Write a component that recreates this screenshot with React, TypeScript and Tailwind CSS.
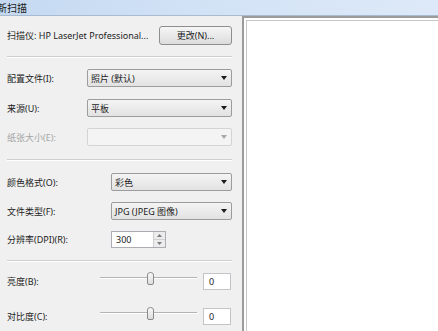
import React from "react";

const font = { fontFamily: '"Noto Sans", "Noto Sans CJK SC", sans-serif' };

function Arrow({ disabled }: { disabled?: boolean }) {
  return (
    <svg width="6" height="4" viewBox="0 0 6 4" className="shrink-0">
      <path d="M0 0 H6 L3 4 Z" fill={disabled ? "#a8a8a8" : "#1a1a1a"} />
    </svg>
  );
}

function Combo({ text, disabled }: { text?: string; disabled?: boolean }) {
  return (
    <div
      className={
        "flex h-[18px] min-w-0 flex-1 items-center justify-between rounded-[2px] border pl-[3px] pr-[4px] " +
        (disabled
          ? "border-[#d4d4d4] bg-[#f4f4f4]"
          : "border-[#9c9c9c] bg-gradient-to-b from-[#f4f4f4] to-[#e2e2e2]")
      }
    >
      <span className="whitespace-nowrap leading-none text-[#1c1c1c]">{text}</span>
      <Arrow disabled={disabled} />
    </div>
  );
}

function Sep() {
  return <div className="h-[2px] w-[225px] border-t border-[#cfcfcf] border-b border-b-white" />;
}

function Slider() {
  return (
    <div className="relative h-[17px] w-[97px] shrink-0">
      <div className="absolute left-0 right-0 top-[4px] h-[2px] border-t border-[#b4b4b4] border-b border-b-white" />
      <svg className="absolute left-[47px] top-[-1px]" width="7" height="13" viewBox="0 0 7 13">
        <defs>
          <linearGradient id="th" x1="0" y1="0" x2="0" y2="1">
            <stop offset="0" stopColor="#fafafa" />
            <stop offset="1" stopColor="#dcdcdc" />
          </linearGradient>
        </defs>
        <path d="M0.5 3 Q0.5 0.5 3.5 0.5 Q6.5 0.5 6.5 3 V11 Q6.5 12.5 5 12.5 H2 Q0.5 12.5 0.5 11 Z" fill="url(#th)" stroke="#8a8a8a" />
      </svg>
    </div>
  );
}

function ValueBox() {
  return (
    <div className="ml-[6px] flex h-[17px] w-[28px] shrink-0 items-center border border-[#c2c4c8] bg-white pl-[5px]">0</div>
  );
}

export default function App() {
  return (
    <div className="flex h-[331px] w-[438px] flex-col overflow-hidden bg-[#f0f0f0] text-[#1c1c1c]" style={font}>
      <div className="flex h-[16px] shrink-0 items-center border-b border-[#a9bbcf] bg-gradient-to-r from-[#c4d9f1] via-[#d3e3f6] to-[#dde9f8]">
        <span className="ml-[-3px] whitespace-nowrap text-[10px] leading-none text-[#1a1a1a]">新扫描</span>
      </div>
      <div className="flex min-h-0 flex-1">
        <div className="flex w-[242px] shrink-0 flex-col whitespace-nowrap pl-[7px] pt-[10px] text-[9px] leading-none">
          <div className="flex h-[19px] items-center">
            <span>扫描仪: HP LaserJet Professional...</span>
            <div className="ml-auto mr-[10px] flex h-[19px] w-[73px] shrink-0 items-center justify-center rounded-[3px] border border-[#8e8e8e] bg-gradient-to-b from-[#f6f6f6] to-[#dcdcdc]">
              更改(N)...
            </div>
          </div>
          <div className="mt-[11px]"><Sep /></div>
          <div className="mt-[11px] flex items-center pr-[10px]">
            <span className="w-[80px] shrink-0">配置文件(I):</span>
            <Combo text="照片 (默认)" />
          </div>
          <div className="mt-[12px] flex items-center pr-[10px]">
            <span className="w-[80px] shrink-0">来源(U):</span>
            <Combo text="平板" />
          </div>
          <div className="mt-[11px] flex items-center pr-[10px]">
            <span className="w-[80px] shrink-0 text-[#a6a6a6]">纸张大小(E):</span>
            <Combo disabled />
          </div>
          <div className="mt-[13px]"><Sep /></div>
          <div className="mt-[12px] flex items-center pr-[10px]">
            <span className="w-[104px] shrink-0">颜色格式(O):</span>
            <Combo text="彩色" />
          </div>
          <div className="mt-[11px] flex items-center pr-[10px]">
            <span className="w-[104px] shrink-0">文件类型(F):</span>
            <Combo text="JPG (JPEG 图像)" />
          </div>
          <div className="mt-[11px] flex items-center">
            <span className="w-[104px] shrink-0">分辨率(DPI)(R):</span>
            <div className="flex h-[17px] w-[55px] border border-[#abadb3] bg-white">
              <span className="flex flex-1 items-center pl-[4px]">300</span>
              <div className="flex w-[12px] flex-col border-l border-[#d0d0d0]">
                <div className="flex flex-1 items-center justify-center border-b border-[#d0d0d0] bg-[#ececec]">
                  <svg width="5" height="3" viewBox="0 0 5 3"><path d="M0 3 H5 L2.5 0 Z" fill="#7a7a7a" /></svg>
                </div>
                <div className="flex flex-1 items-center justify-center bg-[#ececec]">
                  <svg width="5" height="3" viewBox="0 0 5 3"><path d="M0 0 H5 L2.5 3 Z" fill="#7a7a7a" /></svg>
                </div>
              </div>
            </div>
          </div>
          <div className="mt-[12px]"><Sep /></div>
          <div className="mt-[11px] flex items-center">
            <span className="w-[93px] shrink-0">亮度(B):</span>
            <Slider />
            <ValueBox />
          </div>
          <div className="mt-[18px] flex items-center">
            <span className="w-[93px] shrink-0">对比度(C):</span>
            <Slider />
            <ValueBox />
          </div>
        </div>
        <div className="flex flex-1 border-l-2 border-t-2 border-[#9b9b9b] bg-white pl-[2px] pt-[2px]">
          <div className="flex-1 border-l border-t border-[#c6c6c6] bg-white" />
        </div>
      </div>
    </div>
  );
}
